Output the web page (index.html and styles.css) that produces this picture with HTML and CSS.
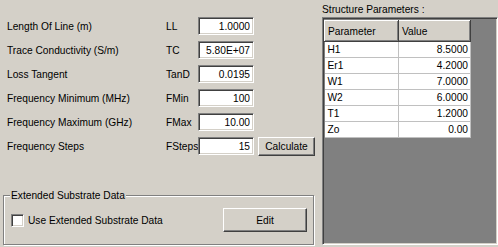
FILE: index.html
```html
<!DOCTYPE html>
<html lang="en">
<head>
  <meta charset="UTF-8">
  <title>Structure Parameters</title>
  <link rel="stylesheet" href="styles.css">
</head>
<body>
  <div class="window">
    <div class="left">
      <div class="params">
        <div class="row"><span class="label">Length Of Line (m)</span><span class="code">LL</span><input class="field" value="1.0000"></div>
        <div class="row"><span class="label">Trace Conductivity (S/m)</span><span class="code">TC</span><input class="field" value="5.80E+07"></div>
        <div class="row"><span class="label">Loss Tangent</span><span class="code">TanD</span><input class="field" value="0.0195"></div>
        <div class="row"><span class="label">Frequency Minimum (MHz)</span><span class="code">FMin</span><input class="field" value="100"></div>
        <div class="row"><span class="label">Frequency Maximum (GHz)</span><span class="code">FMax</span><input class="field" value="10.00"></div>
        <div class="row"><span class="label">Frequency Steps</span><span class="code">FSteps</span><input class="field" value="15"><button class="btn calc">Calculate</button></div>
      </div>
      <div class="group">
        <div class="group-title">Extended Substrate Data</div>
        <div class="group-body">
          <label class="check"><span class="box"></span>Use Extended Substrate Data</label>
          <button class="btn edit">Edit</button>
        </div>
      </div>
    </div>
    <div class="right">
      <div class="caption">Structure Parameters :</div>
      <div class="grid">
        <table class="table">
          <tr><th>Parameter</th><th>Value</th></tr>
          <tr><td>H1</td><td class="num">8.5000</td></tr>
          <tr><td>Er1</td><td class="num">4.2000</td></tr>
          <tr><td>W1</td><td class="num">7.0000</td></tr>
          <tr><td>W2</td><td class="num">6.0000</td></tr>
          <tr><td>T1</td><td class="num">1.2000</td></tr>
          <tr><td>Zo</td><td class="num">0.00</td></tr>
        </table>
      </div>
    </div>
  </div>
</body>
</html>
```

FILE: styles.css
```css
:root {
  --face: #d4d0c8;
  --shadow: #808080;
  --dark: #404040;
  --light: #fff;
}
* { box-sizing: border-box; }
body {
  margin: 0;
  background: var(--face);
  font: 10.2px "Liberation Sans", Arial, sans-serif;
  color: #000;
}
.window {
  display: flex;
  height: 247px;
}
.left {
  width: 318px;
  padding-top: 17px;
}
.params {
  display: flex;
  flex-direction: column;
  gap: 6px;
  padding-left: 7px;
}
.row {
  display: flex;
  align-items: center;
  height: 18px;
}
.label { width: 159px; }
.code { width: 32px; }
.field {
  width: 56px;
  height: 18px;
  margin: 0;
  padding: 0 3px;
  font: inherit;
  text-align: right;
  background: #fff;
  border: 1px solid;
  border-color: var(--shadow) var(--light) var(--light) var(--shadow);
  box-shadow: inset 1px 1px var(--dark), inset -1px -1px var(--face);
  outline: none;
}
.btn {
  margin: 0;
  padding: 0;
  font: inherit;
  color: #000;
  background: var(--face);
  border: 1px solid;
  border-color: var(--light) var(--dark) var(--dark) var(--light);
  box-shadow: inset -1px -1px var(--shadow);
}
.calc {
  width: 57px;
  height: 19px;
  margin-left: 4px;
}
/* cadre grave */
.group {
  margin: 40px 0 0 3px;
  width: 311px;
  height: 50px;
  border: 1px solid var(--shadow);
  box-shadow: inset 1px 1px var(--light), 1px 1px var(--light);
}
.group-title {
  width: max-content;
  margin: -7px 0 0 6px;
  padding: 0 1px;
  background: var(--face);
  line-height: 13px;
}
.group-body {
  display: flex;
  align-items: center;
  justify-content: space-between;
  margin-top: 6px;
  padding: 0 6px 0 7px;
}
.check {
  display: flex;
  align-items: center;
  gap: 4px;
}
.box {
  width: 13px;
  height: 13px;
  background: #fff;
  border: 1px solid;
  border-color: var(--shadow) var(--light) var(--light) var(--shadow);
  box-shadow: inset 1px 1px var(--dark), inset -1px -1px var(--face);
}
.edit {
  width: 84px;
  height: 24px;
}
.right {
  flex: 1;
  display: flex;
  flex-direction: column;
  padding: 3px 0 2px 4px;
}
.caption {
  line-height: 13px;
  height: 14px;
}
.grid {
  flex: 1;
  background: var(--shadow);
  border: 1px solid;
  border-color: var(--shadow) var(--light) var(--light) var(--shadow);
  box-shadow: inset 1px 1px var(--dark), inset -1px -1px var(--face);
  padding: 2px 0 0 1px;
}
.table {
  border-collapse: collapse;
  border-right: 1px solid #000;
  border-bottom: 1px solid #000;
}
.table th {
  width: 74px;
  height: 21px;
  padding: 0 0 0 3px;
  font-weight: normal;
  text-align: left;
  background: var(--face);
  border: 1px solid;
  border-color: var(--light) var(--dark) var(--dark) var(--light);
  box-shadow: inset -1px -1px var(--shadow);
}
.table th + th { width: 72px; }
.table td {
  height: 16px;
  padding: 0 0 0 3px;
  background: #fff;
  border-right: 1px solid #c0c0c0;
  border-bottom: 1px solid #c0c0c0;
}
.table td.num {
  text-align: right;
  padding: 0 2px 0 0;
}
```
